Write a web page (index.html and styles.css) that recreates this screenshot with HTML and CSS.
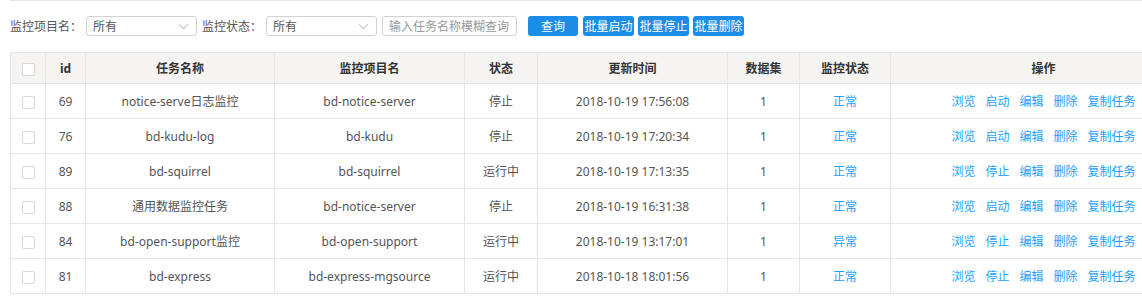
FILE: index.html
```html
<!DOCTYPE html>
<html>
<head>
    <title>监控任务</title>
    <link rel="stylesheet" href="styles.css">
</head>
<body>
    <div class="page">
        <!-- 查询条件 -->
        <div class="filtros">
            <label>监控项目名：</label>
            <div class="select-box"><span>所有</span><i class="flecha"></i></div>
            <label>监控状态：</label>
            <div class="select-box"><span>所有</span><i class="flecha"></i></div>
            <input type="text" class="buscar" placeholder="输入任务名称模糊查询" />
            <button class="btn btn-query">查询</button>
            <button class="btn">批量启动</button>
            <button class="btn">批量停止</button>
            <button class="btn">批量删除</button>
        </div>

        <!-- 任务列表 -->
        <div class="tabla-wrap">
            <table class="tabla">
                <colgroup>
                    <col style="width:35px"><col style="width:40px"><col style="width:189px">
                    <col style="width:190px"><col style="width:73px"><col style="width:190px">
                    <col style="width:72px"><col style="width:91px"><col style="width:306px">
                </colgroup>
                <thead>
                    <tr>
                        <th><span class="check"></span></th>
                        <th>id</th>
                        <th>任务名称</th>
                        <th>监控项目名</th>
                        <th>状态</th>
                        <th>更新时间</th>
                        <th>数据集</th>
                        <th>监控状态</th>
                        <th>操作</th>
                    </tr>
                </thead>
                <tbody id="filas"></tbody>
            </table>
        </div>
    </div>

    <script>
        var tareas = [
            { id: 69, nombre: 'notice-serve日志监控', proyecto: 'bd-notice-server', estado: '停止', fecha: '2018-10-19 17:56:08', datos: 1, monitor: '正常' },
            { id: 76, nombre: 'bd-kudu-log', proyecto: 'bd-kudu', estado: '停止', fecha: '2018-10-19 17:20:34', datos: 1, monitor: '正常' },
            { id: 89, nombre: 'bd-squirrel', proyecto: 'bd-squirrel', estado: '运行中', fecha: '2018-10-19 17:13:35', datos: 1, monitor: '正常' },
            { id: 88, nombre: '通用数据监控任务', proyecto: 'bd-notice-server', estado: '停止', fecha: '2018-10-19 16:31:38', datos: 1, monitor: '正常' },
            { id: 84, nombre: 'bd-open-support监控', proyecto: 'bd-open-support', estado: '运行中', fecha: '2018-10-19 13:17:01', datos: 1, monitor: '异常' },
            { id: 81, nombre: 'bd-express', proyecto: 'bd-express-mgsource', estado: '运行中', fecha: '2018-10-18 18:01:56', datos: 1, monitor: '正常' }
        ];

        function mostrarTareas() {
            var filas = document.getElementById('filas');
            filas.innerHTML = '';

            tareas.forEach(function (t) {
                var accion = t.estado === '停止' ? '启动' : '停止';
                var tr = document.createElement('tr');
                tr.innerHTML = `
                    <td><span class="check"></span></td>
                    <td>${t.id}</td>
                    <td>${t.nombre}</td>
                    <td>${t.proyecto}</td>
                    <td>${t.estado}</td>
                    <td>${t.fecha}</td>
                    <td>${t.datos}</td>
                    <td><a class="link">${t.monitor}</a></td>
                    <td class="acciones">
                        <a class="link">浏览</a><a class="link">${accion}</a><a class="link">编辑</a><a class="link">删除</a><a class="link">复制任务</a>
                    </td>
                `;
                filas.appendChild(tr);
            });
        }

        mostrarTareas();
    </script>
</body>
</html>
```

FILE: styles.css
```css
body {
    margin: 0;
    font-family: "Noto Sans", "Noto Sans CJK SC", sans-serif;
    font-size: 12px;
    color: #555;
    background-color: #fff;
    overflow: hidden;
}

.page {
    margin-left: 10px;
    border-top: 1px solid #e6e6e6;
}

.filtros {
    display: flex;
    align-items: center;
    height: 20px;
    margin-top: 15px;
}

.filtros label {
    margin-right: 4px;
}

.select-box {
    box-sizing: border-box;
    width: 111px;
    height: 20px;
    border: 1px solid #d2d2d2;
    border-radius: 3px;
    padding: 0 6px;
    display: flex;
    align-items: center;
    justify-content: space-between;
    margin-right: 5px;
    color: #555;
}

.flecha {
    width: 6px;
    height: 6px;
    border-right: 1px solid #c2c2c2;
    border-bottom: 1px solid #c2c2c2;
    transform: rotate(45deg);
    margin: -4px 3px 0 0;
}

.buscar {
    box-sizing: border-box;
    width: 135px;
    height: 20px;
    border: 1px solid #d2d2d2;
    border-radius: 3px;
    padding: 0 6px;
    font-family: inherit;
    font-size: 12px;
    margin-left: 0;
    margin-right: 11px;
}

.buscar::placeholder {
    color: #999;
}

.btn {
    box-sizing: border-box;
    height: 20px;
    width: 51px;
    padding: 0;
    border: none;
    border-radius: 3px;
    background-color: #1c8de6;
    color: #fff;
    font-family: inherit;
    font-size: 12px;
    margin-right: 4px;
    cursor: pointer;
}

.btn-query {
    width: 50px;
    margin-right: 5px;
}

.tabla-wrap {
    margin-top: 16px;
    width: 1186px;
}

.tabla {
    width: 1186px;
    table-layout: fixed;
    border-collapse: collapse;
}

.tabla th,
.tabla td {
    border: 1px solid #e6e6e6;
    text-align: center;
    padding: 0;
    white-space: nowrap;
    overflow: hidden;
}

.tabla th {
    height: 30px;
    background-color: #f5f4f2;
    color: #333;
    font-weight: bold;
    font-size: 12px;
}

.tabla td {
    height: 34px;
}

.check {
    display: inline-block;
    box-sizing: border-box;
    width: 13px;
    height: 13px;
    border: 1px solid #d8d8d8;
    border-radius: 2px;
    background-color: #fff;
    vertical-align: middle;
}

.link {
    color: #1e9fff;
    cursor: pointer;
}

.acciones .link {
    margin: 0 5px;
}
```
